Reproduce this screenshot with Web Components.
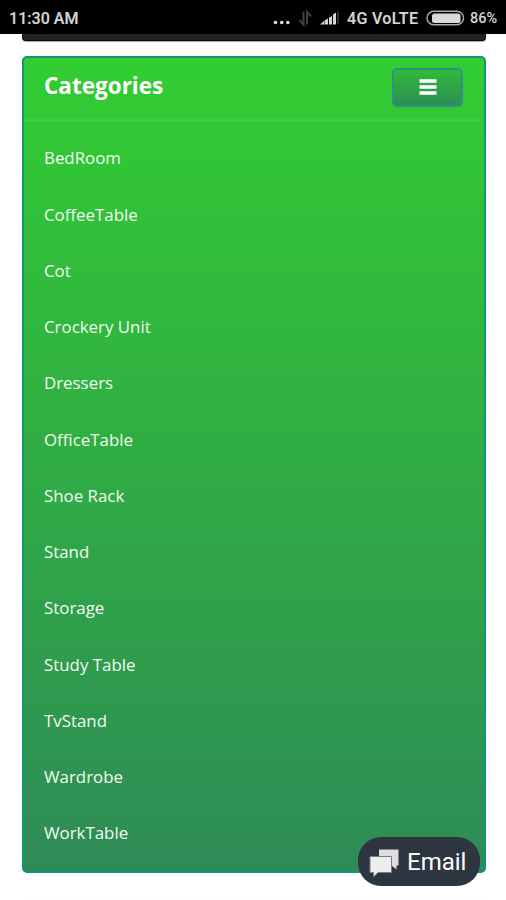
<!DOCTYPE html>
<html lang="en">
<head>
<meta charset="utf-8">
<title>Categories</title>
<style>
html,body{margin:0;height:100%;overflow:hidden;background:#fff}
</style>
</head>
<body>
<store-page></store-page>
<script>
function define(name, html) {
  customElements.define(name, class extends HTMLElement {
    constructor() {
      super();
      const t = document.createElement('template');
      t.innerHTML = html;
      this.attachShadow({ mode: 'open' }).append(t.content.cloneNode(true));
    }
  });
}

define('status-bar', `
<style>
:host{display:flex;align-items:center;box-sizing:border-box;height:34px;padding:3px 8px 0 9px;background:#000;color:#d6d6d6;font:500 16px/20px Roboto,sans-serif;white-space:nowrap}
svg{display:block;flex:none}
.time{flex:1;letter-spacing:.05px;-webkit-text-stroke:.2px #d6d6d6}
.dots{margin-right:7px}
.data{margin-right:7px}
.signal{margin-right:7px}
.net{width:72px;letter-spacing:.35px;margin-right:7px;-webkit-text-stroke:.2px #d6d6d6}
.bat{margin-right:5px}
.pct{font-size:14.5px;width:28px;letter-spacing:.05px}
</style>
<span class="time">11:30 AM</span>
<svg class="dots" width="18" height="20"><g fill="#ddd"><circle cx="2.500" cy="13.500" r="1.800"/><circle cx="8.700" cy="13.500" r="1.800"/><circle cx="14.800" cy="13.500" r="1.800"/></g></svg>
<svg class="data" width="14" height="20"><path d="M5.500 2.500v13L1.500 11M9 15.500V3l4 4.500" fill="none" stroke="#404040" stroke-width="2"/></svg>
<svg class="signal" width="21" height="20"><g fill="#d6d6d6"><path d="M1 15.500l4-3.500v3.500zM5.500 11.500L9 9.500v6H5.500zM10 8.500l3-1.500v8.500h-3zM14 5.500l3-2v12h-3z"/><path d="M18 3l2-1v13.500h-2z" fill="#2b2b2b"/></g></svg>
<span class="net">4G VoLTE</span>
<svg class="bat" width="39" height="20"><rect x="1" y="2.300" width="36.500" height="13.500" rx="6.750" fill="#000" stroke="#aaa" stroke-width="1.400"/><rect x="6" y="4.500" width="28.500" height="9.500" rx="2.500" fill="#d9d9d9"/></svg>
<span class="pct">86%</span>`);

define('nav-edge', `
<style>:host{display:block;box-sizing:border-box;height:7px;margin:0 20px 0 22px;background:#222;border:1px solid #080808;border-width:0 1px 1px;border-radius:0 0 4px 4px;box-shadow:0 1px 1px #0005}</style>`);

define('menu-toggle', `
<style>
:host{display:block}
button{display:flex;align-items:center;justify-content:center;box-sizing:border-box;width:71px;height:39px;padding:0 0 1px;border:2px solid #2b9387;border-radius:5px;background:linear-gradient(#32bd38,#2e8b57) border-box}
svg{display:block}
</style>
<button aria-label="Toggle categories"><svg width="18" height="16"><path d="M.5 2h17M.5 8h17M.5 14h17" stroke="#fff" stroke-width="3.600"/></svg></button>`);

define('category-item', `
<style>:host{display:block;box-sizing:border-box;height:56.250px;padding:15px 20px;color:#f2fbf1;font:16.875px/26px "Open Sans",sans-serif}</style>
<slot></slot>`);

define('category-panel', `
<style>
:host{display:block;box-sizing:border-box;height:817px;margin:15px 20px 0 22px;border:2px solid #10947c;border-radius:5px;background:linear-gradient(#32cd32,#2e8b57) border-box}
header{display:flex;align-items:flex-start;justify-content:space-between;box-sizing:border-box;height:63px;padding:10px 21px 0 20px;border-bottom:2px solid #3acf3a}
h1{margin:0;color:#fff;font:700 22.500px/36px "Open Sans",sans-serif}
nav{padding-top:9.400px}
</style>
<header><h1><slot name="title"></slot></h1><menu-toggle></menu-toggle></header>
<nav><slot></slot></nav>`);

define('email-button', `
<style>
:host{position:fixed;left:358px;top:837px;display:flex;align-items:center;box-sizing:border-box;width:122px;height:49px;padding-left:11px;border-radius:23px;background:#2d3541;color:#fff;font:24px/30px Roboto,sans-serif}
svg{display:block;margin:3px 7px 0 0}
</style>
<svg width="31" height="29"><path d="M10 .5h19.500v16h-2v4l-5-4H10z" fill="#dedede"/><path d="M1 7.500h21.500v16H9l-4.500 4.500v-4.500H1z" fill="#eee" stroke="#777d85" stroke-width="1"/></svg>
<slot></slot>`);

define('store-page', `
<style>
:host{display:block;height:900px;overflow:hidden}
footer{margin:24px 20px 0 22px;border-top:1px solid #fafafa}
</style>
<status-bar></status-bar>
<nav-edge></nav-edge>
<category-panel>
<span slot="title">Categories</span>
<category-item>BedRoom</category-item>
<category-item>CoffeeTable</category-item>
<category-item>Cot</category-item>
<category-item>Crockery Unit</category-item>
<category-item>Dressers</category-item>
<category-item>OfficeTable</category-item>
<category-item>Shoe Rack</category-item>
<category-item>Stand</category-item>
<category-item>Storage</category-item>
<category-item>Study Table</category-item>
<category-item>TvStand</category-item>
<category-item>Wardrobe</category-item>
<category-item>WorkTable</category-item>
</category-panel>
<footer></footer>
<email-button>Email</email-button>`);
</script>
</body>
</html>
